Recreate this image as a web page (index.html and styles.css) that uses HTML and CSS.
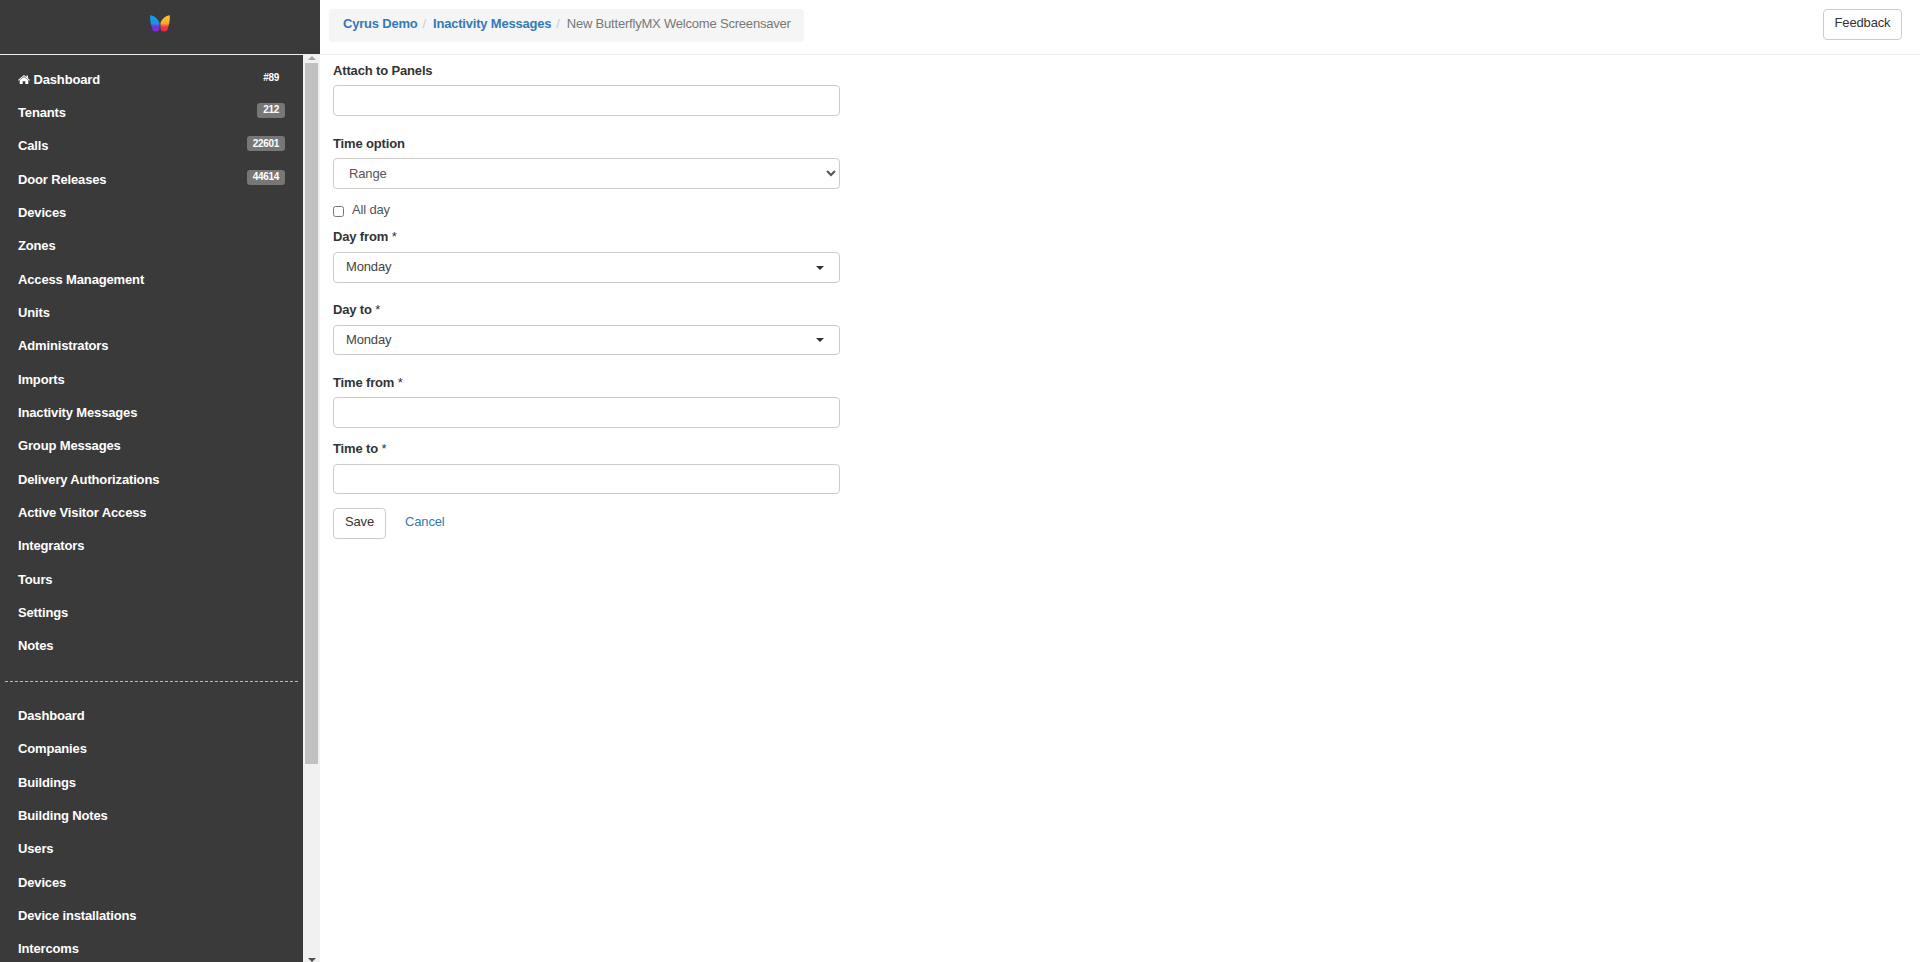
FILE: index.html
```html
<!DOCTYPE html>
<html lang="en">
<head>
<meta charset="utf-8">
<title>New ButterflyMX Welcome Screensaver</title>
<link rel="stylesheet" href="styles.css">
</head>
<body>
<aside class="sidebar">
  <div class="brand">
    <svg class="logo" width="20" height="17" viewBox="0 0 20 17">
      <defs>
        <linearGradient id="lw" x1="0" y1="0" x2="0" y2="1"><stop offset="0" stop-color="#0ba5ec"/><stop offset="0.5" stop-color="#1b8fe8"/><stop offset="0.72" stop-color="#7b2be0"/><stop offset="1" stop-color="#8a2be2"/></linearGradient>
        <linearGradient id="rw" x1="0" y1="0" x2="0" y2="1"><stop offset="0" stop-color="#f9c531"/><stop offset="0.5" stop-color="#f7a92b"/><stop offset="0.72" stop-color="#f0304a"/><stop offset="1" stop-color="#ee2a4e"/></linearGradient>
      </defs>
      <path d="M0.300 0.300 C4 0.800 8 3.500 9.500 8 V13 C9.500 15.500 7.500 17 5 16.500 C3 16 2 14.500 2 12.500 C0.800 10 -0.200 5 0.300 0.300 Z" fill="url(#lw)"/>
      <path d="M19.700 0.300 C16 0.800 12 3.500 10.500 8 V13 C10.500 15.500 12.500 17 15 16.500 C17 16 18 14.500 18 12.500 C19.200 10 20.200 5 19.700 0.300 Z" fill="url(#rw)"/>
    </svg>
  </div>
  <div class="side-body">
    <nav class="menu">
      <ul class="nav-list">
        <li><a class="nav-item" href="#"><span><svg class="home" width="12" height="9" viewBox="0 0 12 9"><path d="M6 0 L8.400 2 V0.600 H9.900 V3.300 L12 5 L11.400 5.700 L6 1.300 L0.600 5.700 L0 5 Z M1.700 5.300 L6 1.900 L10.300 5.300 V9 H7.300 V6.300 H4.700 V9 H1.700 Z" fill="#fff"/></svg> Dashboard</span><span class="badge plain">#89</span></a></li>
        <li><a class="nav-item" href="#"><span>Tenants</span><span class="badge">212</span></a></li>
        <li><a class="nav-item" href="#"><span>Calls</span><span class="badge">22601</span></a></li>
        <li><a class="nav-item" href="#"><span>Door Releases</span><span class="badge">44614</span></a></li>
        <li><a class="nav-item" href="#"><span>Devices</span></a></li>
        <li><a class="nav-item" href="#"><span>Zones</span></a></li>
        <li><a class="nav-item" href="#"><span>Access Management</span></a></li>
        <li><a class="nav-item" href="#"><span>Units</span></a></li>
        <li><a class="nav-item" href="#"><span>Administrators</span></a></li>
        <li><a class="nav-item" href="#"><span>Imports</span></a></li>
        <li><a class="nav-item" href="#"><span>Inactivity Messages</span></a></li>
        <li><a class="nav-item" href="#"><span>Group Messages</span></a></li>
        <li><a class="nav-item" href="#"><span>Delivery Authorizations</span></a></li>
        <li><a class="nav-item" href="#"><span>Active Visitor Access</span></a></li>
        <li><a class="nav-item" href="#"><span>Integrators</span></a></li>
        <li><a class="nav-item" href="#"><span>Tours</span></a></li>
        <li><a class="nav-item" href="#"><span>Settings</span></a></li>
        <li><a class="nav-item" href="#"><span>Notes</span></a></li>
      </ul>
      <div class="divider"></div>
      <ul class="nav-list">
        <li><a class="nav-item" href="#"><span>Dashboard</span></a></li>
        <li><a class="nav-item" href="#"><span>Companies</span></a></li>
        <li><a class="nav-item" href="#"><span>Buildings</span></a></li>
        <li><a class="nav-item" href="#"><span>Building Notes</span></a></li>
        <li><a class="nav-item" href="#"><span>Users</span></a></li>
        <li><a class="nav-item" href="#"><span>Devices</span></a></li>
        <li><a class="nav-item" href="#"><span>Device installations</span></a></li>
        <li><a class="nav-item" href="#"><span>Intercoms</span></a></li>
      </ul>
    </nav>
    <div class="scrollbar">
      <span class="arrow up"></span>
      <div class="track"><div class="thumb"></div></div>
      <span class="arrow down"></span>
    </div>
  </div>
</aside>
<div class="content">
  <header class="topbar">
    <ol class="breadcrumb">
      <li><a href="#">Cyrus Demo</a><span class="sep">/</span></li>
      <li><a href="#">Inactivity Messages</a><span class="sep">/</span></li>
      <li class="current">New ButterflyMX Welcome Screensaver</li>
    </ol>
    <button class="btn feedback" type="button">Feedback</button>
  </header>
  <main class="form">
    <div class="group roomy">
      <label class="label low">Attach to Panels</label>
      <input class="control" type="text">
    </div>
    <div class="group before-check">
      <label class="label low">Time option</label>
      <select class="control native"><option>Range</option></select>
    </div>
    <label class="check"><input type="checkbox"><span>All day</span></label>
    <div class="group">
      <label class="label">Day from <span class="req">*</span></label>
      <div class="control pick"><span>Monday</span><i class="caret"></i></div>
    </div>
    <div class="group roomy">
      <label class="label">Day to <span class="req">*</span></label>
      <div class="control pick short"><span>Monday</span><i class="caret"></i></div>
    </div>
    <div class="group time-from">
      <label class="label low">Time from <span class="req">*</span></label>
      <input class="control" type="text">
    </div>
    <div class="group time-to">
      <label class="label">Time to <span class="req">*</span></label>
      <input class="control short" type="text">
    </div>
    <div class="actions">
      <button class="btn" type="button">Save</button>
      <a class="cancel" href="#">Cancel</a>
    </div>
  </main>
</div>
</body>
</html>
```
FILE: styles.css
```css
* { box-sizing: border-box; }
html, body { height: 100%; }
body {
  margin: 0;
  height: 962px;
  overflow: hidden;
  display: flex;
  background: #fff;
  color: #333;
  font-family: "Liberation Sans", Arial, sans-serif;
  font-size: 13px;
  line-height: 20px;
  letter-spacing: -0.15px;
}
a { text-decoration: none; }
ul, ol { list-style: none; margin: 0; padding: 0; }

.sidebar { width: 320px; flex: none; display: flex; flex-direction: column; background: #3a3a3a; height: 962px; }
.brand { height: 55px; flex: none; display: flex; justify-content: center; padding-top: 15px; border-bottom: 1px solid #eee; }
.logo { display: block; }
.side-body { flex: 1; display: flex; min-height: 0; }
.menu { width: 303px; flex: none; overflow: hidden; padding-top: 8px; }
.nav-item { display: flex; justify-content: space-between; align-items: center; height: 33.330px; padding: 0 18px; color: #fff; font-weight: 700; font-size: 13px; }
.home { vertical-align: 0; }
.badge { background: #777; color: #fff; font-size: 10px; line-height: 10px; letter-spacing: -0.3px; padding: 2.500px 6px; border-radius: 3px; margin-top: -5px; }
.badge.plain { background: transparent; margin-top: -4px; }
.divider { margin: 18.500px 5px 17px; border-top: 1px dashed #bbb; }

.scrollbar { width: 17px; flex: none; background: #f1f1f1; display: flex; flex-direction: column; align-items: center; }
.track { flex: 1; width: 100%; padding: 0 2px; }
.thumb { height: 701px; background: #c1c1c1; }
.arrow { width: 0; height: 0; border-left: 4px solid transparent; border-right: 4px solid transparent; flex: none; }
.arrow.up { border-bottom: 4px solid #a3a3a3; margin: 1px 0 3px; }
.arrow.down { border-top: 4px solid #505050; }

.content { flex: 1; min-width: 0; }
.topbar { height: 55px; border-bottom: 1px solid #eee; display: flex; justify-content: space-between; align-items: flex-start; padding: 9px 18px 0 9px; }
.breadcrumb { display: flex; height: 33px; align-items: center; background: #f5f5f5; border-radius: 4px; padding: 0 13px 3px 14px; letter-spacing: -0.2px; }
.breadcrumb a { color: #337ab7; font-weight: 700; }
.sep { color: #ccc; padding: 0 7px 0 5px; }
.current { color: #777; }
.btn { background: #fff; border: 1px solid #ccc; border-radius: 4px; color: #333; font: 13px/20px "Liberation Sans", Arial, sans-serif; letter-spacing: -0.15px; padding: 0 0 3px; height: 31px; }
.feedback { width: 79px; }

.form { width: 520px; padding: 6px 0 0 13px; }
.group { margin-bottom: 17px; }
.group.roomy { margin-bottom: 18px; }
.group.before-check { margin-bottom: 11px; }
.group.time-from { margin-bottom: 11px; }
.group.time-to { margin-bottom: 14px; }
.label { display: block; font-weight: 700; font-size: 13px; margin-bottom: 5px; }
.label.low { margin-bottom: 4px; }
.req { font-weight: 400; }
.control { display: block; width: 507px; height: 31px; border: 1px solid #ccc; border-radius: 4px; background: #fff; color: #555; font: 13px "Liberation Sans", Arial, sans-serif; letter-spacing: -0.15px; padding: 0 12px; }
.control.short { height: 30px; }
.native { padding: 0 11px; }
.pick { display: flex; justify-content: space-between; align-items: center; color: #444; padding: 0 15px 2px 12px; }
.caret { width: 0; height: 0; margin-top: 2px; border-left: 4.500px solid transparent; border-right: 4.500px solid transparent; border-top: 4.500px solid #333; }
.check { display: flex; align-items: flex-start; height: 20px; margin-bottom: 7px; color: #555; }
.check input { margin: 6px 8px 0 0; width: 11px; height: 11px; }
.actions { display: flex; align-items: center; gap: 19px; }
.actions .btn { width: 53px; }
.cancel { color: #337ab7; padding-bottom: 3px; }
```
